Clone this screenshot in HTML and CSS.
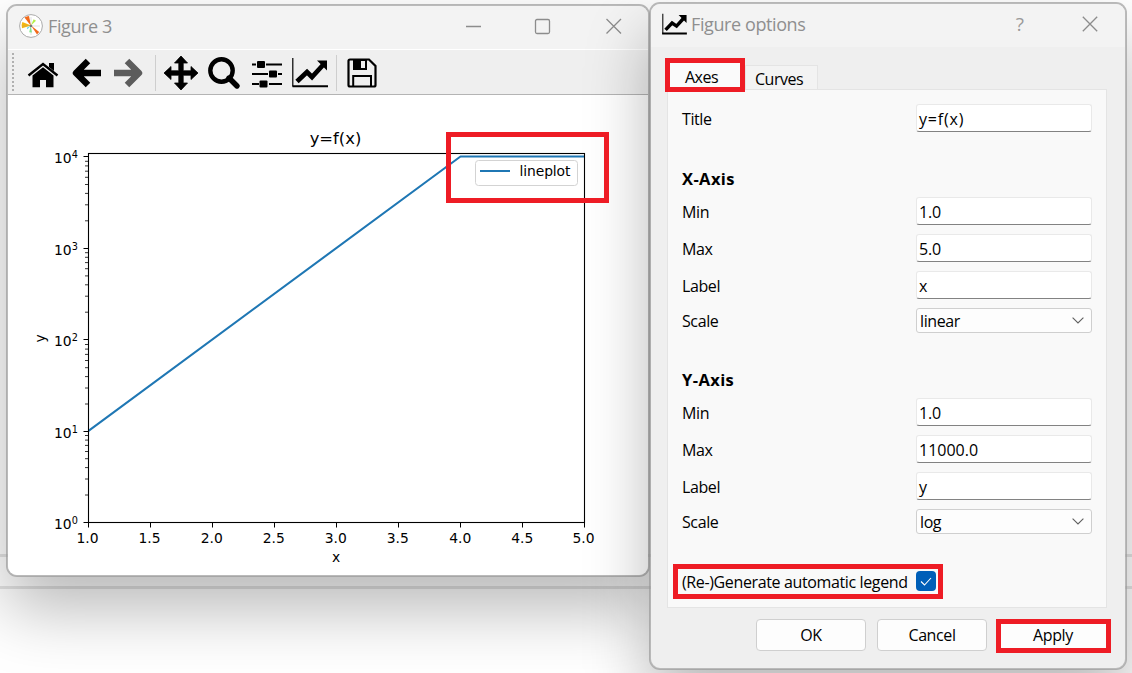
FILE: index.html
```html
<!DOCTYPE html>
<html lang="en">
<head>
<meta charset="utf-8">
<title>Figure 3</title>
<link rel="stylesheet" href="styles.css">
</head>
<body>
<main class="desktop">
  <div class="rule rule-top"></div>
  <div class="rule rule-bottom"></div>

  <section class="window figure-window">
    <header class="titlebar">
      <svg class="app-icon" width="26" height="26" viewBox="0 0 26 26">
        <circle cx="13" cy="13" r="11.4" fill="#fff" stroke="#aaa"/>
        <path d="M13 13L6.5 4.5A10 10 0 0 1 11 3Z" fill="#f26a1b"/>
        <path d="M13 12.5L4 15.2A9 9 0 0 1 4.4 9Z" fill="#f5b50f"/>
        <path d="M13 12.5L15.6 6.2L18 7.8Z" fill="#b5f04a"/>
        <path d="M13 12.6L21.2 19L19 21.4Z" fill="#f26a1b"/>
        <path d="M12.6 13L14 19.5L11.2 19.3Z" fill="#7df08a"/>
        <path d="M12.5 13L9.5 16.2L8.7 14.8Z" fill="#5fd8e8"/>
        <path d="M4 13H22M13 4V22" stroke="#999" stroke-width=".3"/>
        <circle cx="13" cy="13" r="1.3" fill="#777"/>
      </svg>
      <h1 class="title">Figure 3</h1>
      <svg class="controls" width="158" height="18" viewBox="0 0 158 18" fill="none" stroke="#8c8c8c" stroke-width="1.3">
        <path d="M0 9.5H15"/>
        <rect x="69.5" y="2.5" width="14" height="14" rx="1.5"/>
        <path d="M140.5 2L155 16.5M155 2L140.5 16.5"/>
      </svg>
    </header>
    <nav class="toolbar">
      <span class="grip"></span>
      <svg class="tool" viewBox="0 0 36 36"><path d="M3.5 20.5L18 9L32.5 20.5" fill="none" stroke="#000" stroke-width="2.4"/><path d="M24 8H29V16L24 12ZM18 12.2L28.5 20.5V32.3H21V25H15V32.3H7.5V20.5Z"/></svg>
      <svg class="tool" viewBox="0 0 36 36"><path d="M32 18H8M19 6L7 18L19 30" fill="none" stroke="#000" stroke-width="6.4" stroke-linejoin="round"/></svg>
      <svg class="tool" viewBox="0 0 36 36"><path d="M4 18H28M17 6L29 18L17 30" fill="none" stroke="#5c5c5c" stroke-width="6.4" stroke-linejoin="round"/></svg>
      <span class="separator"></span>
      <svg class="tool" viewBox="0 0 36 36"><path d="M18 1L24.5 8H20.2V15.8H28V11.5L35 18L28 24.5V20.2H20.2V28H24.5L18 35L11.5 28H15.8V20.2H8V24.5L1 18L8 11.5V15.8H15.8V8H11.5Z" stroke="#000" stroke-width=".8" stroke-linejoin="round"/></svg>
      <svg class="tool" viewBox="0 0 36 36"><g fill="none" stroke="#000"><circle cx="15.5" cy="15.5" r="11.2" stroke-width="4.4"/><path d="M23 23L31 31" stroke-width="5.4" stroke-linecap="round"/></g></svg>
      <svg class="tool" viewBox="0 0 36 36"><path d="M3 9.5H33M3 19H33M3 29H33" stroke="#000" stroke-width="2"/><path d="M7 9.5H17M19 19H29M10 29H20" stroke="#efefef" stroke-width="3"/><g><rect x="8" y="6" width="8" height="7" rx="1"/><rect x="20" y="15.5" width="8" height="7" rx="1"/><rect x="10.5" y="25.5" width="8" height="7" rx="1"/></g></svg>
      <svg class="tool" viewBox="0 0 36 36"><path d="M.8 3V31.6" stroke="#000" stroke-width="1.2"/><path d="M.5 31.2H36" stroke="#000" stroke-width="2"/><path d="M5 26.5L15 17L20 22L31 10" fill="none" stroke="#000" stroke-width="4.8"/><path d="M25 5.5H35V15.5Z"/></svg>
      <span class="separator"></span>
      <svg class="tool" viewBox="0 0 36 36"><path d="M4.5 6A1.5 1.5 0 0 1 6 4.5H25L31.5 11V30A1.5 1.5 0 0 1 30 31.5H6A1.5 1.5 0 0 1 4.5 30Z" fill="none" stroke="#000" stroke-width="2.2"/><path d="M9 4V15H23V4ZM17 6V13H21V6Z" fill-rule="evenodd"/><path d="M9.2 31V21H27V31" fill="none" stroke="#000" stroke-width="2"/></svg>
    </nav>
    <svg class="canvas" width="640" height="480" viewBox="0 0 640 480">
      <defs>
        <path id="minor" d="M77 -27.5H80M77 -43.5H80M77 -54.9H80M77 -63.8H80M77 -71H80M77 -77.1H80M77 -82.4H80M77 -87H80"/>
      </defs>
      <g stroke="#000" stroke-width=".8">
        <use href="#minor" y="427.5"/><use href="#minor" y="336.5"/><use href="#minor" y="244.7"/><use href="#minor" y="153.3"/>
      </g>
      <polyline points="80.5,335.8 452.5,61.5 576.5,61.5" fill="none" stroke="#1f77b4" stroke-width="2.08" stroke-linejoin="round"/>
      <rect x="80.5" y="58.5" width="496" height="369" fill="none" stroke="#000" stroke-width="1.1"/>
      <path class="ticks" d="M80.5 428V432.5M142.5 428V432.5M204.5 428V432.5M266.5 428V432.5M328.5 428V432.5M390.5 428V432.5M452.5 428V432.5M514.5 428V432.5M576.5 428V432.5M75.5 427.5H80M75.5 336.5H80M75.5 244.5H80M75.5 153.5H80M75.5 61.5H80" stroke="#000"/>
      <g class="axis-text" text-anchor="middle">
        <text x="79.5" y="448">1.0</text><text x="141.5" y="448">1.5</text><text x="203.8" y="448">2.0</text><text x="265.8" y="448">2.5</text><text x="327.8" y="448">3.0</text><text x="389.8" y="448">3.5</text><text x="452.2" y="448">4.0</text><text x="514.2" y="448">4.5</text><text x="575.5" y="448">5.0</text>
        <text x="328" y="467">x</text>
        <text transform="translate(36.5 243.5) rotate(-90)">y</text>
      </g>
      <g class="axis-text">
        <text x="46" y="434">10<tspan class="power" dy="-5.5">0</tspan></text>
        <text x="46" y="343">10<tspan class="power" dy="-5.5">1</tspan></text>
        <text x="46" y="251">10<tspan class="power" dy="-5.5">2</tspan></text>
        <text x="46" y="160">10<tspan class="power" dy="-5.5">3</tspan></text>
        <text x="46" y="68">10<tspan class="power" dy="-5.5">4</tspan></text>
      </g>
      <text class="plot-title" x="327.5" y="49" text-anchor="middle">y=f(x)</text>
      <rect x="467.5" y="65.5" width="102" height="25" rx="3" fill="#fff" stroke="#d3d3d3"/>
      <path d="M472 76H502" stroke="#1f77b4" stroke-width="2.08"/>
      <text class="axis-text legend-text" x="511.5" y="81">lineplot</text>
    </svg>
  </section>

  <section class="window options-window">
    <header class="titlebar">
      <svg class="app-icon" width="25" height="22" viewBox="0 0 36 32"><path d="M1 1V30" stroke="#000" stroke-width="1.5"/><path d="M0 29.8H36" stroke="#000" stroke-width="2.6"/><path d="M5 24.5L14.5 14.5L21 19L31 8" fill="none" stroke="#000" stroke-width="5"/><path d="M24 3H35.5V14.5Z"/></svg>
      <h1 class="title">Figure options</h1>
      <span class="help">?</span>
      <svg class="close" width="16" height="16" viewBox="0 0 16 16"><path d="M.8 .8L15.2 15.2M15.2 .8L.8 15.2" stroke="#8c8c8c" stroke-width="1.3"/></svg>
    </header>
    <div class="tabs"><span class="tab active">Axes</span><span class="tab">Curves</span></div>
    <form class="panel">
      <label class="name">Title</label><span class="field title-field">y=f(x)</span>
      <h2 class="heading">X-Axis</h2>
      <label class="name">Min</label><span class="field">1.0</span>
      <label class="name">Max</label><span class="field">5.0</span>
      <label class="name">Label</label><span class="field">x</span>
      <label class="name scale-name">Scale</label><span class="field select">linear<svg width="12" height="7" viewBox="0 0 12 7"><path d="M.6 .6L6 6L11.4 .6" fill="none" stroke="#606060" stroke-width="1.1"/></svg></span>
      <h2 class="heading">Y-Axis</h2>
      <label class="name">Min</label><span class="field">1.0</span>
      <label class="name">Max</label><span class="field number">11000.0</span>
      <label class="name">Label</label><span class="field">y</span>
      <label class="name scale-name">Scale</label><span class="field select">log<svg width="12" height="7" viewBox="0 0 12 7"><path d="M.6 .6L6 6L11.4 .6" fill="none" stroke="#606060" stroke-width="1.1"/></svg></span>
      <label class="name legend-name">(Re-)Generate automatic legend</label>
      <span class="checkbox"><svg width="20" height="20" viewBox="0 0 20 20"><path d="M5 10.5L8.5 14L15 7" fill="none" stroke="#fff" stroke-width="1.1"/></svg></span>
    </form>
    <footer class="actions"><span class="button">OK</span><span class="button">Cancel</span><span class="button">Apply</span></footer>
  </section>

  <div class="mark mark-plot"></div>
  <div class="mark mark-tab"></div>
  <div class="mark mark-legend"></div>
  <div class="mark mark-apply"></div>
</main>
</body>
</html>
```
FILE: styles.css
```css
* { box-sizing: border-box; }
body { margin: 0; font: 16px/20px "Open Sans", "Noto Sans", sans-serif; color: #000; }
.desktop { position: relative; width: 1132px; height: 673px; overflow: hidden; background: #fff; }
.rule { position: absolute; left: 0; width: 100%; height: 3px; background: #e4e4e4; }
.rule-top { top: 554px; }
.rule-bottom { top: 586px; }

.window { position: absolute; border: 2px solid rgba(150, 150, 150, .66); background: #efefef; background-clip: padding-box; overflow: hidden; }
.figure-window { left: 6px; top: 4px; width: 644px; height: 573px; border-radius: 11px; box-shadow: 0 32px 66px rgba(0, 0, 0, .28); }
.options-window { left: 649px; top: 2px; width: 478px; height: 668px; border-radius: 11px; box-shadow: 0 32px 64px rgba(0, 0, 0, .28); }

.titlebar { display: flex; align-items: center; background: #f3f3f3; }
.title { margin: 0; font-size: 18px; font-weight: 400; line-height: 24px; color: #8f8f8f; }
.figure-window .titlebar { height: 44px; padding: 0 24px 3px 10px; border-bottom: 1px solid #fff; }
.figure-window .title { margin-left: 4px; letter-spacing: -.4px; }
.controls { margin-left: auto; }
.options-window .titlebar { height: 43px; padding: 0 27px 3px 11px; }
.options-window .title { margin-left: 4px; letter-spacing: -.4px; }
.help { margin-left: auto; margin-right: 58px; font-size: 19px; color: #9a9a9a; }

.toolbar { display: grid; grid-template-columns: 17px 44px 41px 45px 8px 43px 43px 43px 44px 8px 36px; align-items: center; height: 45px; padding-top: 1px; border-bottom: 1px solid #b4b4b4; }
.tool { width: 36px; height: 36px; }
.grip { width: 2px; height: 39px; margin-left: 4px; background: repeating-linear-gradient(#b0b0b0 0 2px, transparent 2px 4px); }
.separator { height: 36px; border-left: 1px solid #cecece; }
.canvas { display: block; background: #fff; }
.axis-text { font: 13.89px "DejaVu Sans", sans-serif; }
.legend-text { letter-spacing: -.1px; }
.power { font-size: 9.72px; }
.plot-title { font: 16.4px "DejaVu Sans", sans-serif; }

.tabs { display: flex; align-items: flex-end; height: 42px; padding-left: 16px; }
.tab { width: 73px; height: 24px; padding: 3px 0 0 9px; border: 1px solid #e4e4e4; border-bottom: 0; background: #f3f3f3; letter-spacing: -.5px; }
.tab.active { width: 78px; height: 29px; padding: 6px 0 0 17px; background: #fafafa; }
.panel { display: grid; grid-template-columns: 234px 176px; grid-template-rows: 28px 65px 37px 37px 37px 25px 65px 37px 37px 37px 25px 94px; align-items: start; align-content: start; width: 440px; height: 519px; margin: 0 0 0 16px; padding: 14px; border: 1px solid #e4e4e4; background: #f9f9f9; }
.name { padding-top: 5px; letter-spacing: -.4px; white-space: nowrap; }
.scale-name { padding-top: 3px; }
.heading { grid-column: 1 / 3; margin: 0; padding-top: 37px; font-size: 16.5px; font-weight: 700; line-height: 20px; letter-spacing: .4px; }
.field { display: flex; align-items: center; height: 28px; padding: 2px 2px 0; border: 1px solid #e9e9e9; border-bottom: 1px solid #828282; border-radius: 3px; background: #fff; letter-spacing: -.2px; }
.title-field { letter-spacing: .8px; }
.number { letter-spacing: 0; }
.select { justify-content: space-between; height: 25px; padding: 0 7px 0 3px; border: 1px solid #cfcfcf; background: #fdfdfd; letter-spacing: -.4px; }
.legend-name { padding-top: 38px; letter-spacing: -.37px; }
.checkbox { width: 20px; height: 20px; margin-top: 37px; border-radius: 4px; background: #005fb8; }
.actions { display: flex; gap: 11px; padding: 11px 0 0 105px; }
.button { display: grid; place-items: center; width: 110px; height: 32px; border: 1px solid #cfcfcf; border-radius: 4px; background: #fdfdfd; letter-spacing: -.4px; }

.mark { position: absolute; border: 5px solid #ee1c25; }
.mark-plot { left: 446px; top: 132px; width: 163px; height: 71px; }
.mark-tab { left: 665px; top: 58px; width: 80px; height: 34px; }
.mark-legend { left: 673px; top: 564px; width: 270px; height: 35px; }
.mark-apply { left: 996px; top: 619px; width: 115px; height: 34px; }
```
